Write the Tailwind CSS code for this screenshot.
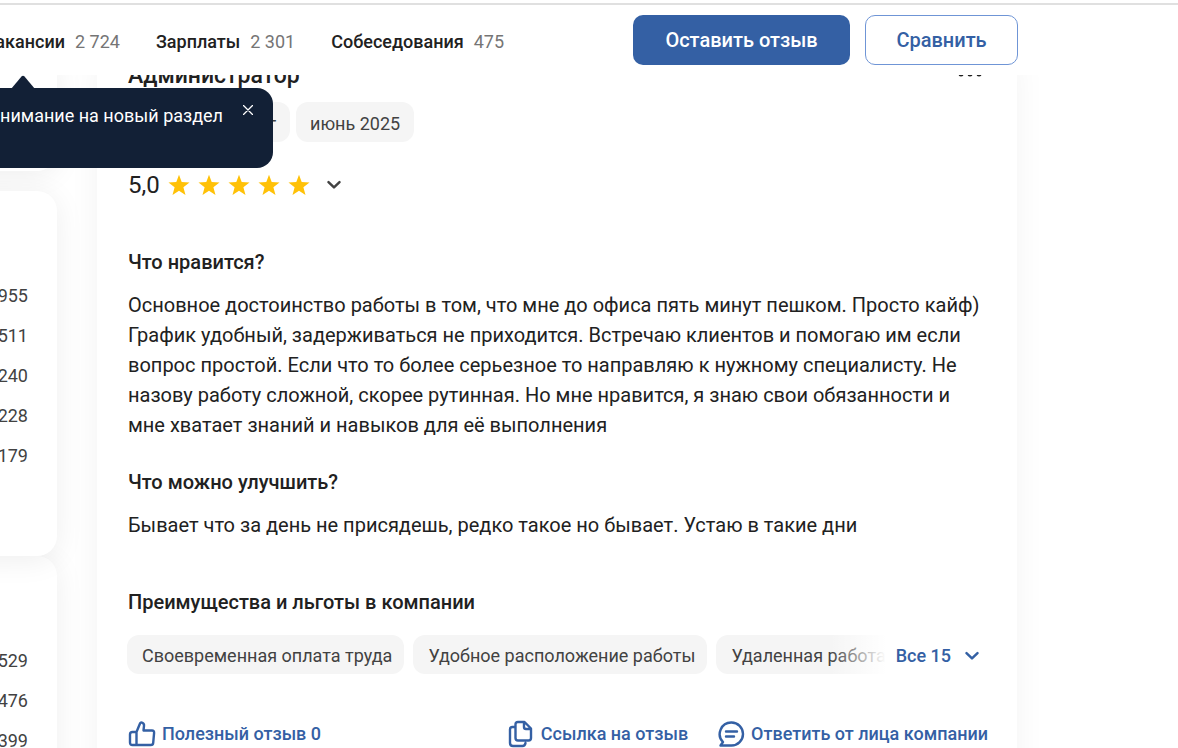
<!DOCTYPE html>
<html lang="ru">
<head>
  <meta charset="UTF-8">
  <title>Отзывы о компании</title>
  <script src="https://cdn.jsdelivr.net/npm/@tailwindcss/browser@4"></script>
</head>
<body class="h-screen overflow-hidden bg-white font-[Roboto,sans-serif] text-[#212121]">
  <header class="relative z-20 bg-white pt-[3px]">
    <div class="flex h-[72px] items-center border-t-2 border-[#e0e0e0]">
      <nav class="-ml-4 flex flex-1 items-center gap-9 pt-1 text-lg whitespace-nowrap">
        <a href="#" class="flex gap-[10px] font-medium">Вакансии <span class="font-normal text-[#757575]">2 724</span></a>
        <a href="#" class="flex gap-[10px] font-medium">Зарплаты <span class="font-normal text-[#757575]">2 301</span></a>
        <a href="#" class="flex gap-[10px] font-medium">Собеседования <span class="font-normal text-[#757575]">475</span></a>
      </nav>
      <div class="mr-40 flex gap-[15px] text-xl font-medium">
        <button class="h-[50px] w-[217px] rounded-[10px] bg-[#3460a4] text-white">Оставить отзыв</button>
        <button class="h-[50px] w-[153px] rounded-[10px] border border-[#6f95d6] text-[#3460a4]">Сравнить</button>
      </div>
    </div>

    <!-- tooltip -->
    <div class="absolute top-[88px] -left-40 h-20 w-[433px] rounded-2xl bg-[#122036] pt-[14px] pr-[50px] text-right text-lg text-white">
      <svg class="absolute -top-[13px] left-[171px] h-[14px] w-6" viewBox="0 0 24 14" fill="#122036"><path d="M0 14 10.500 1.500q1.500-1.500 3 0L24 14z"/></svg>
      Обратите внимание на новый раздел
      <button class="absolute top-[17px] right-5 size-[10px]" aria-label="Закрыть">
        <svg class="size-[10px]" viewBox="0 0 10 10" fill="none" stroke="#fff" stroke-width="1.300" stroke-linecap="round"><path d="M.5.5l9 9M9.500.5l-9 9"/></svg>
      </button>
    </div>
  </header>

  <div class="-mt-5 flex items-start gap-10">
    <aside class="relative z-10 -ml-20 flex w-[137px] shrink-0 flex-col text-right text-lg leading-10 text-[#424242]">
      <div class="h-[116px] rounded-[20px] bg-white shadow-[0_4px_30px_rgba(0,0,0,0.07)]"></div>
      <ul class="relative z-10 mt-5 h-[365px] rounded-[20px] bg-white pt-[85px] pr-[29px] shadow-[0_4px_30px_rgba(0,0,0,0.07)]">
        <li>955</li>
        <li>511</li>
        <li>240</li>
        <li>228</li>
        <li>179</li>
      </ul>
      <ul class="h-[365px] rounded-[20px] bg-white pt-[85px] pr-[29px] shadow-[0_4px_30px_rgba(0,0,0,0.07)]">
        <li>529</li>
        <li>476</li>
        <li>399</li>
      </ul>
    </aside>

    <main class="relative z-10 max-w-[920px] flex-1 bg-white px-[31px] pb-10 shadow-[0_4px_30px_rgba(0,0,0,0.05)]">
      <div class="flex h-[47px] items-start justify-between pt-[3px]">
        <h2 class="text-[23px] leading-9 font-medium">Администратор</h2>
        <button class="mt-3 mr-[2px]" aria-label="Действия">
          <svg class="h-2 w-[28px]" viewBox="0 0 28 8" fill="#212121"><circle cx="5" cy="4" r="2.500"/><circle cx="14" cy="4" r="2.500"/><circle cx="23" cy="4" r="2.500"/></svg>
        </button>
      </div>
      <div class="flex gap-[6px] text-lg text-[#424242]">
        <span class="h-10 w-[162px] rounded-xl bg-[#f5f5f5] pr-[14px] text-right leading-[44px]">Москва г</span>
        <span class="h-10 rounded-xl bg-[#f5f5f5] px-[14px] leading-[44px]">июнь 2025</span>
      </div>

      <div class="mt-[28px] flex h-[30px] items-center">
        <span class="mr-2 text-2xl leading-7">5,0</span>
        <div class="flex gap-2" role="img" aria-label="5 из 5">
          <svg class="size-[22px]" viewBox="0 0 22 22" fill="#ffc107"><path d="M11 .8l2.700 7.200 7.800.4-6.100 4.900 2.100 7.700L11 16.800 4.500 21l2.100-7.700L.5 8.400 8.300 8z"/></svg>
          <svg class="size-[22px]" viewBox="0 0 22 22" fill="#ffc107"><path d="M11 .8l2.700 7.200 7.800.4-6.100 4.900 2.100 7.700L11 16.800 4.500 21l2.100-7.700L.5 8.400 8.300 8z"/></svg>
          <svg class="size-[22px]" viewBox="0 0 22 22" fill="#ffc107"><path d="M11 .8l2.700 7.200 7.800.4-6.100 4.900 2.100 7.700L11 16.800 4.500 21l2.100-7.700L.5 8.400 8.300 8z"/></svg>
          <svg class="size-[22px]" viewBox="0 0 22 22" fill="#ffc107"><path d="M11 .8l2.700 7.200 7.800.4-6.100 4.900 2.100 7.700L11 16.800 4.500 21l2.100-7.700L.5 8.400 8.300 8z"/></svg>
          <svg class="size-[22px]" viewBox="0 0 22 22" fill="#ffc107"><path d="M11 .8l2.700 7.200 7.800.4-6.100 4.900 2.100 7.700L11 16.800 4.500 21l2.100-7.700L.5 8.400 8.300 8z"/></svg>
        </div>
        <button class="ml-4" aria-label="Показать оценки">
          <svg class="h-[10px] w-4" viewBox="0 0 16 10" fill="none" stroke="#424242" stroke-width="2.500" stroke-linecap="round" stroke-linejoin="round"><path d="M2.500 2.200l5.500 5.200 5.500-5.200"/></svg>
        </button>
      </div>

      <section class="-mr-1 mt-[47px] text-xl leading-[30px]">
        <h3 class="font-medium">Что нравится?</h3>
        <p class="mt-[13px]">Основное достоинство работы в том, что мне до офиса пять минут пешком. Просто кайф) График удобный, задерживаться не приходится. Встречаю клиентов и помогаю им если вопрос простой. Если что то более серьезное то направляю к нужному специалисту. Не назову работу сложной, скорее рутинная. Но мне нравится, я знаю свои обязанности и мне хватает знаний и навыков для её выполнения</p>
        <h3 class="mt-[27px] font-medium">Что можно улучшить?</h3>
        <p class="mt-[13px]">Бывает что за день не присядешь, редко такое но бывает. Устаю в такие дни</p>
        <h3 class="mt-[47px] font-medium">Преимущества и льготы в компании</h3>
      </section>

      <div class="mt-[18px] flex items-center">
        <div class="relative -ml-px min-w-0 flex-1 overflow-hidden">
          <div class="flex gap-[9px] text-lg whitespace-nowrap text-[#424242]">
            <span class="h-[39px] rounded-xl bg-[#f5f5f5] pr-3 pl-[15px] leading-[41px]">Своевременная оплата труда</span>
            <span class="h-[39px] rounded-xl bg-[#f5f5f5] pr-3 pl-[15px] leading-[41px]">Удобное расположение работы</span>
            <span class="h-[39px] rounded-xl bg-[#f5f5f5] pr-3 pl-[15px] leading-[41px]">Удаленная работа</span>
          </div>
          <div class="absolute inset-y-0 right-0 w-14 bg-linear-to-r from-white/0 to-white"></div>
        </div>
        <button class="mr-[6px] ml-[10px] flex items-center gap-[13px] pt-[2px] text-lg font-medium text-[#3460a4]">
          Все 15
          <svg class="h-[10px] w-4" viewBox="0 0 16 10" fill="none" stroke="currentColor" stroke-width="2.500" stroke-linecap="round" stroke-linejoin="round"><path d="M2.500 2.200l5.500 5.200 5.500-5.200"/></svg>
        </button>
      </div>

      <div class="-mr-[2px] mt-[45px] flex items-center gap-[29px] text-lg leading-[30px] font-medium whitespace-nowrap text-[#3460a4]">
        <button class="mr-auto flex items-center gap-[6px]">
          <svg class="size-7" viewBox="0 0 28 28" fill="none" stroke="currentColor" stroke-width="2.400" stroke-linejoin="round"><path d="M8.500 12v13M4.500 12h4l3.300-8q.8-2 2.700-1.200 1.800.8 1.500 3L15.500 10.500H24q2.300 0 2.100 2.300l-.9 10q-.2 2.200-2.400 2.200H4.500Q2 25 2 22.500V14.500q0-2.500 2.500-2.500z"/></svg>
          Полезный отзыв 0
        </button>
        <button class="flex items-center gap-[6px]">
          <svg class="size-7" viewBox="0 0 28 28" fill="none" stroke="currentColor" stroke-width="2.400" stroke-linejoin="round" stroke-linecap="round"><path d="M11 2h6.500l6.500 6.500V18q0 2.500-2.500 2.500H11Q8.500 20.500 8.500 18V4.500Q8.500 2 11 2zM17 2.500V7q0 2 2 2h4.500M8 7H5.500Q3 7 3 9.500V23q0 3 3 3h9.500q2.500 0 3-3"/></svg>
          Ссылка на отзыв
        </button>
        <button class="flex items-center gap-[6px]">
          <svg class="size-7" viewBox="0 0 28 28" fill="none" stroke="currentColor" stroke-width="2.400" stroke-linejoin="round" stroke-linecap="round"><path d="M14.500 2.500a11.500 11.500 0 1 1 0 23H3.500l2.500-3.500A11.500 11.500 0 0 1 14.500 2.500zM9 11.500h11M9 16.500h8"/></svg>
          Ответить от лица компании
        </button>
      </div>
    </main>
  </div>
</body>
</html>
